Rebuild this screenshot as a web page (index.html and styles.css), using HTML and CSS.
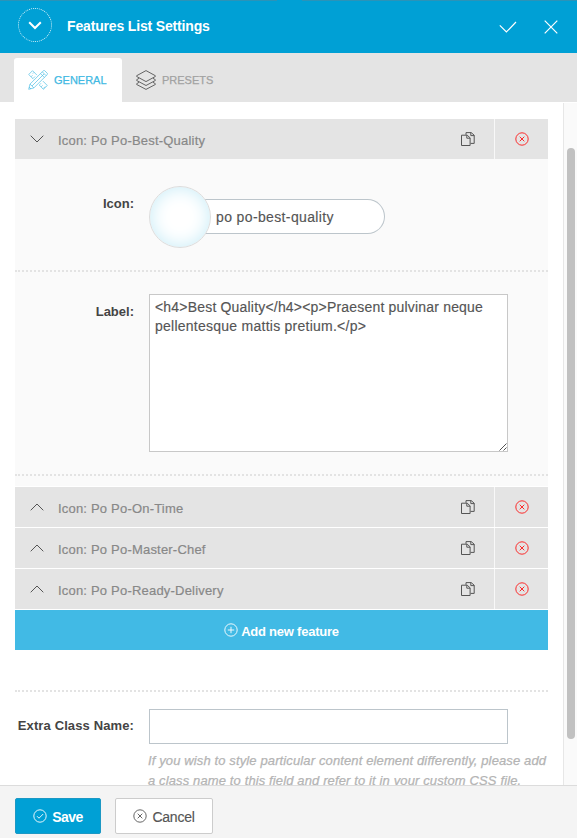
FILE: index.html
```html
<!DOCTYPE html>
<html lang="en">
<head>
<meta charset="utf-8">
<title>Features List Settings</title>
<link rel="stylesheet" href="styles.css">
</head>
<body>
<svg class="defs" width="0" height="0" aria-hidden="true">
  <symbol id="copy" viewBox="0 0 14 14"><path d="M.5 3.2h5.7l2.9 2.6v7.7H.5zM5.8 3.2v3h3.3M5 2.8V.6h5.2l3 2.6v8.2H9.6M9.8.6v3h3.4"/></symbol>
  <symbol id="remove" viewBox="0 0 14 14"><circle cx="7" cy="7" r="6.2"/><path d="M4.7 4.7l4.6 4.6M9.3 4.7L4.7 9.3"/></symbol>
  <symbol id="down" viewBox="0 0 14 8"><path d="M.7.7L7 7 13.3.7"/></symbol>
  <symbol id="up" viewBox="0 0 14 8"><path d="M.7 7.3L7 1l6.3 6.3"/></symbol>
</svg>
<div class="dialog">
  <header class="header">
    <span class="toggle"><svg width="14" height="9" viewBox="0 0 14 9"><path d="M1.2 1.2L7 7l5.8-5.8"/></svg></span>
    <h1 class="title">Features List Settings</h1>
    <svg class="confirm" width="18" height="12" viewBox="0 0 18 12"><path d="M.8 4.4l6.6 6.6L17 1"/></svg>
    <svg class="close" width="14" height="14" viewBox="0 0 14 14"><path d="M.7.7l12.6 12.6M13.3.7L.7 13.3"/></svg>
  </header>
  <nav class="tabs">
    <a class="tab tab-active">
      <svg width="20" height="20" viewBox="0 0 20 20"><path d="M4.5.7L.7 4.5l4.5 4.4M4.5.7L9 5.2M11.2 15l4.2 4.3 3.9-3.8-4.4-4.4M3 6.8l1.5-1.5M5 8.5l2-2M6 2.4L4.8 3.6M13.2 16.8l1.4-1.4M15.2 18.6l2-2M11.5 14.8l1.5-1.5M14.3 1.8l1.2-1.1q.6-.4 1.2 0l2.6 2.6q.5.6 0 1.2l-1.2 1.2zM14.3 1.8L2 14.1.7 19.3l5.2-1.4L18.1 5.7M12.5 3.6l3.9 3.9M2 14.1l3.9 3.8M4 16L16 4M1 17l2 2"/></svg>
      <span>GENERAL</span>
    </a>
    <a class="tab">
      <svg width="20" height="20" viewBox="0 0 20 20"><path d="M10 .6l9.3 5.1v.8L10 11.6.7 6.5v-.8zM3 8.3L.7 9.7v.8L10 15.5l9.3-5v-.8L17 8.3M3 12.3L.7 13.7v.8l9.3 4.9 9.3-4.9v-.8L17 12.3"/></svg>
      <span>PRESETS</span>
    </a>
  </nav>
  <main class="body">
    <div class="content">
      <div class="row"><svg class="caret" width="14" height="8"><use href="#down"/></svg><span class="name">Icon: Po Po-Best-Quality</span><svg class="copy" width="14" height="14"><use href="#copy"/></svg><span class="delete"><svg width="14" height="14"><use href="#remove"/></svg></span></div>
      <div class="panel">
        <div class="field icon-field">
          <label class="label">Icon:</label>
          <div class="picker"><span class="preview"></span><span class="picker-value">po po-best-quality</span></div>
        </div>
        <div class="field label-field">
          <label class="label">Label:</label>
          <div class="textarea"><div>&lt;h4&gt;Best Quality&lt;/h4&gt;&lt;p&gt;Praesent pulvinar neque</div><div class="line-end">pellentesque mattis pretium.&lt;/p&gt;</div>
            <svg class="grip" width="8" height="8" viewBox="0 0 8 8"><path d="M.5 7.5l7-7M4.5 7.5l3-3"/></svg>
          </div>
        </div>
      </div>
      <div class="row"><svg class="caret" width="14" height="8"><use href="#up"/></svg><span class="name">Icon: Po Po-On-Time</span><svg class="copy" width="14" height="14"><use href="#copy"/></svg><span class="delete"><svg width="14" height="14"><use href="#remove"/></svg></span></div>
      <div class="row"><svg class="caret" width="14" height="8"><use href="#up"/></svg><span class="name">Icon: Po Po-Master-Chef</span><svg class="copy" width="14" height="14"><use href="#copy"/></svg><span class="delete"><svg width="14" height="14"><use href="#remove"/></svg></span></div>
      <div class="row"><svg class="caret" width="14" height="8"><use href="#up"/></svg><span class="name">Icon: Po Po-Ready-Delivery</span><svg class="copy" width="14" height="14"><use href="#copy"/></svg><span class="delete"><svg width="14" height="14"><use href="#remove"/></svg></span></div>
      <div class="add"><svg width="14" height="14" viewBox="0 0 14 14"><circle cx="7" cy="7" r="6.2"/><path d="M7 3.8v6.4M3.8 7h6.4"/></svg><span>Add new feature</span></div>
      <div class="field extra-field">
        <label class="label extra-label">Extra Class Name:</label>
        <div class="extra"><div class="input"></div><p class="help"><span>If you wish to style particular content element differently, please add</span><span>a class name to this field and refer to it in your custom CSS file.</span></p></div>
      </div>
    </div>
    <div class="track"><div class="thumb"></div></div>
  </main>
  <footer class="footer">
    <span class="btn save"><svg width="14" height="14" viewBox="0 0 14 14"><circle cx="7" cy="7" r="6.2"/><path d="M4 7.2l2 2 4.2-4.2"/></svg><span>Save</span></span>
    <span class="btn cancel"><svg width="14" height="14"><use href="#remove"/></svg><span>Cancel</span></span>
  </footer>
</div>
</body>
</html>
```
FILE: styles.css
```css
* { box-sizing: border-box; }
body { margin: 0; font-family: "Liberation Sans", Arial, sans-serif; font-size: 13px; color: #444; background: #fff; }
svg { fill: none; stroke: currentColor; stroke-width: 1; flex: none; display: block; }
.defs { position: absolute; }
.dialog { height: 838px; display: flex; flex-direction: column; overflow: hidden; }
span, label, h1 { white-space: nowrap; }

.header { height: 53px; flex: none; display: flex; align-items: center; padding: 0 19px 0 18px; color: #fff;
  background: linear-gradient(90deg, #2b93b8 277px, transparent 277px, transparent 302px, #2b93b8 302px) top / 100% 1px no-repeat #00a0d5; }
.toggle { width: 34px; height: 34px; margin-top: -3px; border: 1px dotted #d5f0f8; border-radius: 50%; display: flex; align-items: center; justify-content: center; }
.toggle svg { stroke-width: 2; margin-top: 1px; }
.title { margin: -2px auto 0 15px; font-size: 14px; line-height: 20px; font-weight: bold; letter-spacing: -.16px; }
.confirm { margin-right: 27px; stroke-width: 1.2; }
.close { stroke-width: 1.2; }

.tabs { height: 49px; flex: none; background: #e4e4e4; padding: 5px 0 0 14px; display: flex; }
.tab { width: 108px; height: 44px; padding-left: 14px; display: flex; align-items: center; gap: 6px; font-size: 11px; color: #a2a2a2; -webkit-text-stroke: .25px currentColor; }
.tab svg { color: #555; stroke-width: .9; }
.tab-active { background: #fff; border-radius: 3px 3px 0 0; color: #41b9e3; }
.tab-active svg { color: #41b9e3; stroke-width: .65; }

.body { height: 683px; flex: none; display: flex; overflow: hidden; }
.content { width: 533px; margin: 17px 15px 0; flex: none; }
.row { height: 40px; margin-bottom: 1px; background: #e4e4e4; display: flex; align-items: center; padding-left: 15px; color: #888; }
.row:first-child { margin-bottom: 0; }
.caret { color: #555; }
.name { margin: 2px auto 0 14px; letter-spacing: .2px; -webkit-text-stroke: .2px #888; }
.copy { color: #555; margin-right: 19px; }
.delete { width: 54px; height: 40px; border-left: 1px solid #f8f8f8; display: flex; align-items: center; justify-content: center; color: #fb2c2c; }

.panel { height: 327px; margin-bottom: 1px; background: #fafafa; }
.field { display: flex; }
.label { width: 119px; margin-right: 15px; text-align: right; font-weight: bold; line-height: 20px; flex: none; }
.extra-label { letter-spacing: .12px; }
.icon-field { height: 113px; padding-top: 27px; border-bottom: 2px dotted #e3e3e3; }
.icon-field .label { margin-top: 8px; }
.picker { display: flex; align-items: center; width: 236px; height: 62px; }
.preview { width: 62px; height: 62px; border: 1px solid #ddd; border-radius: 50%; background: #fff; box-shadow: inset 0 0 18px #c8ecf7; flex: none; z-index: 1; }
.picker-value { flex: 1; height: 35px; margin: -1px 0 0 -10px; padding-left: 15px; border: 1px solid #bcc5cb; border-left: 0; border-radius: 0 18px 18px 0; background: #fff; font-size: 14px; line-height: 34px; color: #555; letter-spacing: .37px; -webkit-text-stroke: .15px #555; }
.label-field { height: 204px; padding-top: 22px; border-bottom: 2px dotted #e3e3e3; }
.label-field .label { margin-top: 8px; }
.textarea { position: relative; width: 359px; height: 158px; border: 1px solid #c8c8c8; background: #fff; padding: 3px 5px; font-size: 14px; line-height: 19px; color: #555; white-space: nowrap; letter-spacing: .19px; -webkit-text-stroke: .15px #555; }
.line-end { letter-spacing: .25px; }
.grip { position: absolute; right: 0; bottom: 0; }

.add { height: 40px; background: #41bae5; color: #fff; display: flex; align-items: center; justify-content: center; gap: 3px; font-weight: bold; letter-spacing: -.23px; }
.add span { margin-top: 2px; }
.extra-field { margin-top: 40px; padding-top: 17px; border-top: 2px dotted #e3e3e3; height: 110px; }
.extra-field .label { margin-top: 7px; }
.input { width: 359px; height: 35px; border: 1px solid #bcc5cb; background: #fff; }
.help { margin: 7px 0 0 -1px; font-style: italic; line-height: 20px; color: #b4b4b4; letter-spacing: .125px; -webkit-text-stroke: .25px #b4b4b4; }
.help span { display: block; width: max-content; }
.track { width: 14px; margin-top: 1px; border-left: 1px solid #e7e7e7; background: #fafafa; padding: 45px 0 0 3px; flex: none; }
.thumb { width: 8px; height: 591px; border-radius: 4px; background: #c1c1c1; }

.footer { flex: 1; border-top: 1px solid #dcdcdc; background: #f4f4f4; padding: 12px 15px 0; display: flex; gap: 14px; }
.btn { height: 36px; border: 1px solid #ccc; border-radius: 2px; background: #fff; display: flex; align-items: center; justify-content: center; gap: 5px; font-size: 14px; color: #555; letter-spacing: -.25px; }
.btn > span { margin-top: 1px; }
.btn svg { margin-top: -1px; }
.save { width: 86px; background: #00a0d5; border-color: #1c98c4; color: #fff; font-weight: bold; letter-spacing: -.6px; }
.cancel { width: 98px; -webkit-text-stroke: .15px #555; }
.add svg, .btn svg { stroke-width: .9; }
```
